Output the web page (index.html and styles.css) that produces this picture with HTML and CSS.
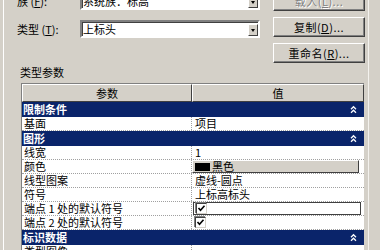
FILE: index.html
```html
<!DOCTYPE html>
<html lang="zh-CN">
<head>
    <meta charset="UTF-8">
    <title>类型属性</title>
    <link rel="stylesheet" href="styles.css">
</head>
<body>
    <div class="dialog">
        <div class="top">
            <div class="fields">
                <div class="field">
                    <span class="label">族 (<u>F</u>):</span>
                    <div class="combo"><span>系统族：标高</span><i class="drop"></i></div>
                </div>
                <div class="field">
                    <span class="label">类型 (<u>T</u>):</span>
                    <div class="combo"><span>上标头</span><i class="drop"></i></div>
                </div>
            </div>
            <div class="buttons">
                <button disabled>载入(<u>L</u>)...</button>
                <button>复制(<u>D</u>)...</button>
                <button>重命名(<u>R</u>)...</button>
            </div>
        </div>

        <div class="caption">类型参数</div>

        <div class="props">
            <div class="head">
                <div>参数</div>
                <div>值</div>
            </div>

            <div class="section">
                <span>限制条件</span>
                <svg class="chev" width="7" height="9" viewBox="0 0 7 9"><path d="M1 4.2L3.5 1.7L6 4.2M1 7.7L3.5 5.2L6 7.7" fill="none" stroke="#fff" stroke-width="1.3"/></svg>
            </div>
            <div class="row"><div class="name">基面</div><div class="val">项目</div></div>

            <div class="section">
                <span>图形</span>
                <svg class="chev" width="7" height="9" viewBox="0 0 7 9"><path d="M1 4.2L3.5 1.7L6 4.2M1 7.7L3.5 5.2L6 7.7" fill="none" stroke="#fff" stroke-width="1.3"/></svg>
            </div>
            <div class="row"><div class="name">线宽</div><div class="val">1</div></div>
            <div class="row">
                <div class="name">颜色</div>
                <div class="val"><div class="color-btn"><i class="swatch"></i>黑色</div></div>
            </div>
            <div class="row"><div class="name">线型图案</div><div class="val">虚线-圆点</div></div>
            <div class="row"><div class="name">符号</div><div class="val">上标高标头</div></div>
            <div class="row">
                <div class="name">端点 1 处的默认符号</div>
                <div class="val"><div class="edit"><span class="check"><svg width="9" height="9" viewBox="0 0 9 9"><path d="M1.5 4L3.5 6.2L7.5 1.8" fill="none" stroke="#000" stroke-width="1.6"/></svg></span></div></div>
            </div>
            <div class="row">
                <div class="name">端点 2 处的默认符号</div>
                <div class="val"><span class="check"><svg width="9" height="9" viewBox="0 0 9 9"><path d="M1.5 4L3.5 6.2L7.5 1.8" fill="none" stroke="#000" stroke-width="1.6"/></svg></span></div>
            </div>

            <div class="section">
                <span>标识数据</span>
                <svg class="chev" width="7" height="9" viewBox="0 0 7 9"><path d="M1 4.2L3.5 1.7L6 4.2M1 7.7L3.5 5.2L6 7.7" fill="none" stroke="#fff" stroke-width="1.3"/></svg>
            </div>
            <div class="row"><div class="name">类型图像</div><div class="val"></div></div>
        </div>
    </div>
</body>
</html>
```

FILE: styles.css
```css
body {
    margin: 0;
    background: #d4d0c8;
    font-family: "Noto Sans CJK SC", "Liberation Sans", sans-serif;
    font-size: 11px;
    color: #000;
    overflow: hidden;
}

.dialog {
    margin-left: 3px;
    width: 364px;
    height: 260px;
    border-left: 1px solid #fff;
    border-right: 1px solid #f4f2ee;
}

/* family / type pickers and the buttons beside them */
.top {
    display: flex;
    margin-top: -9px;
}

.fields {
    display: flex;
    flex-direction: column;
    gap: 10px;
    padding-top: 1px;
    padding-left: 13px;
}

.field {
    display: flex;
    align-items: center;
}

.label {
    width: 63px;
    line-height: 18px;
}

.combo {
    width: 176px;
    height: 14px;
    background: #fff;
    border: 2px solid;
    border-color: #808080 #fff #fff #808080;
    box-shadow: inset 1px 1px #404040;
    display: flex;
    align-items: center;
    justify-content: space-between;
    padding-left: 0;
}

.combo span {
    padding-left: 1px;
    line-height: 14px;
}

.drop {
    width: 10px;
    height: 12px;
    margin-top: 1px;
    background: #d4d0c8;
    border: 1px solid;
    border-color: #fff #404040 #404040 #fff;
    box-sizing: border-box;
    position: relative;
}

.drop::after {
    content: '';
    position: absolute;
    left: 2px;
    top: 4px;
    border-left: 2px solid transparent;
    border-right: 2px solid transparent;
    border-top: 3px solid #000;
}

.buttons {
    display: flex;
    flex-direction: column;
    gap: 6px;
    margin-left: 13px;
}

button {
    width: 92px;
    height: 20px;
    padding: 0;
    font: inherit;
    letter-spacing: 0.5px;
    background: #d4d0c8;
    color: #000;
    border: 1px solid;
    border-color: #fff #404040 #404040 #fff;
    box-shadow: inset -1px -1px #808080;
}

button:disabled {
    color: #808080;
    text-shadow: 1px 1px #fff;
}

.caption {
    margin: 3px 0 0 16px;
    line-height: 13px;
}

/* property grid */
.props {
    margin: 4px 0 0 17px;
    width: 342px;
    border-top: 1px solid #808080;
    border-left: 1px solid #808080;
}

.head {
    display: grid;
    grid-template-columns: 170px 1fr;
    height: 18px;
}

.head div {
    text-align: center;
    line-height: 16px;
    background: #d4d0c8;
    border: 1px solid;
    border-color: #fff #404040 #404040 #fff;
}

.section {
    height: 15px;
    background: #0a246a;
    color: #fff;
    font-weight: bold;
    display: flex;
    align-items: center;
    justify-content: space-between;
    padding: 0 7px 0 1px;
    line-height: 15px;
}

.chev {
    display: block;
}

.row {
    display: grid;
    grid-template-columns: 170px 1fr;
    height: 13px;
    background: #fff;
    border-bottom: 1px dotted #a0a0a0;
    line-height: 13px;
}

.name {
    padding-left: 2px;
    border-right: 1px dotted #a0a0a0;
    white-space: nowrap;
}

.val {
    padding-left: 3px;
}

.color-btn {
    margin-left: -3px;
    width: 167px;
    height: 13px;
    box-sizing: border-box;
    background: #d4d0c8;
    border: 1px solid;
    border-color: #fff #404040 #404040 #fff;
    display: flex;
    align-items: center;
    gap: 2px;
    padding-left: 2px;
    line-height: 11px;
}

.swatch {
    width: 15px;
    height: 8px;
    background: #000;
}

.edit {
    margin-left: -2px;
    width: 168px;
    height: 13px;
    box-sizing: border-box;
    border: 1px solid #404040;
    padding-left: 2px;
    display: flex;
    align-items: center;
}

.check {
    display: inline-flex;
    align-items: center;
    justify-content: center;
    width: 9px;
    height: 9px;
    margin-top: 1px;
    background: #fff;
    border: 1px solid;
    border-color: #404040 #d4d0c8 #d4d0c8 #404040;
    box-shadow: -1px -1px #808080;
    vertical-align: top;
}

.edit .check {
    margin-top: 0;
}
```
